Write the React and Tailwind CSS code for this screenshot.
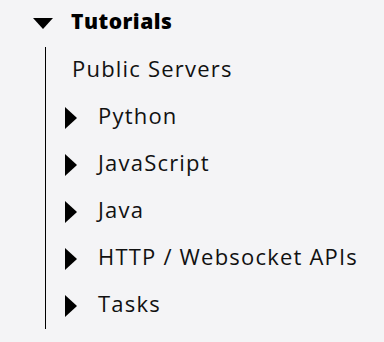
export default function App() {
  const items = ["Python", "JavaScript", "Java", "HTTP / Websocket APIs", "Tasks"];
  return (
    <div className="w-[384px] h-[342px] bg-[#f4f4f6] text-[#111] font-['Open_Sans',sans-serif] overflow-hidden">
      <div className="pl-[33px]">
        <div className="flex items-start h-[47px]">
          <svg className="mt-[18px] shrink-0" width="20" height="11" viewBox="0 0 20 11">
            <polygon points="0,0 20,0 10,11" fill="#000" />
          </svg>
          <span className="ml-[18px] pt-[10px] text-[21px] leading-[22px] font-extrabold tracking-[0.5px] text-black">Tutorials</span>
        </div>
        <div className="ml-[12px] border-l border-black">
          <div className="h-[47px] pl-[26px] pt-[10px] text-[22px] leading-[22px] tracking-[1.2px]">Public Servers</div>
          {items.map((t) => (
            <div key={t} className="flex items-start h-[47px] pl-[19px]">
              <svg className="mt-[13px] shrink-0" width="12" height="22" viewBox="0 0 12 22">
                <polygon points="0,0 12,11 0,22" fill="#000" />
              </svg>
              <span className="ml-[21px] pt-[10px] text-[22px] leading-[22px] tracking-[1.2px]">{t}</span>
            </div>
          ))}
        </div>
      </div>
    </div>
  );
}
